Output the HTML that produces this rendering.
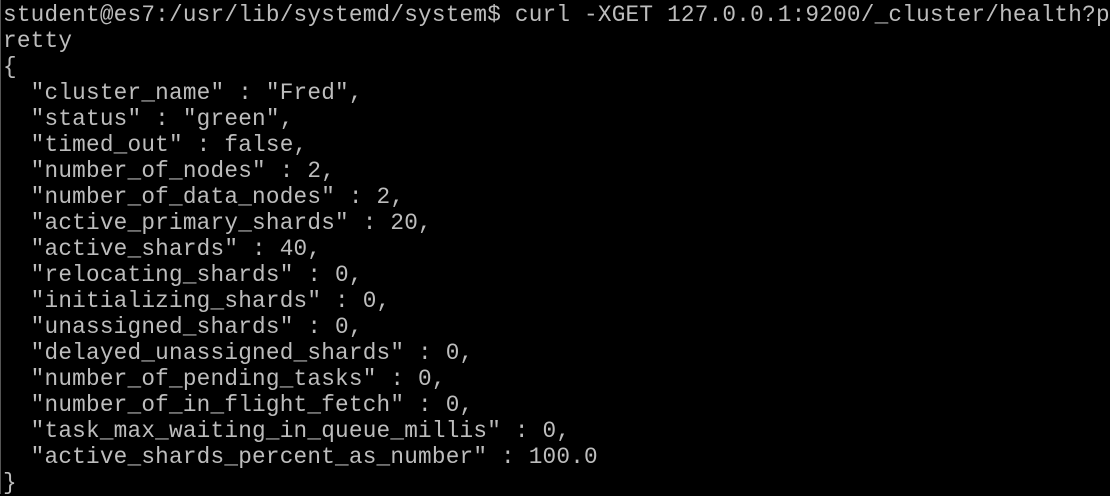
<!DOCTYPE html>
<html><head><meta charset="utf-8"><style>
html,body{margin:0;padding:0;background:#000;width:1110px;height:494px;overflow:hidden}
body{border-left:1px solid #555;box-sizing:border-box}
pre{margin:0;position:absolute;left:3px;top:2px;font-family:"Liberation Mono",monospace;font-size:22.7px;letter-spacing:0.22px;line-height:26px;color:#bdbdbd;white-space:pre}
</style></head><body><pre>student@es7:/usr/lib/systemd/system$ curl -XGET 127.0.0.1:9200/_cluster/health?p
retty
{
  "cluster_name" : "Fred",
  "status" : "green",
  "timed_out" : false,
  "number_of_nodes" : 2,
  "number_of_data_nodes" : 2,
  "active_primary_shards" : 20,
  "active_shards" : 40,
  "relocating_shards" : 0,
  "initializing_shards" : 0,
  "unassigned_shards" : 0,
  "delayed_unassigned_shards" : 0,
  "number_of_pending_tasks" : 0,
  "number_of_in_flight_fetch" : 0,
  "task_max_waiting_in_queue_millis" : 0,
  "active_shards_percent_as_number" : 100.0
}</pre></body></html>
